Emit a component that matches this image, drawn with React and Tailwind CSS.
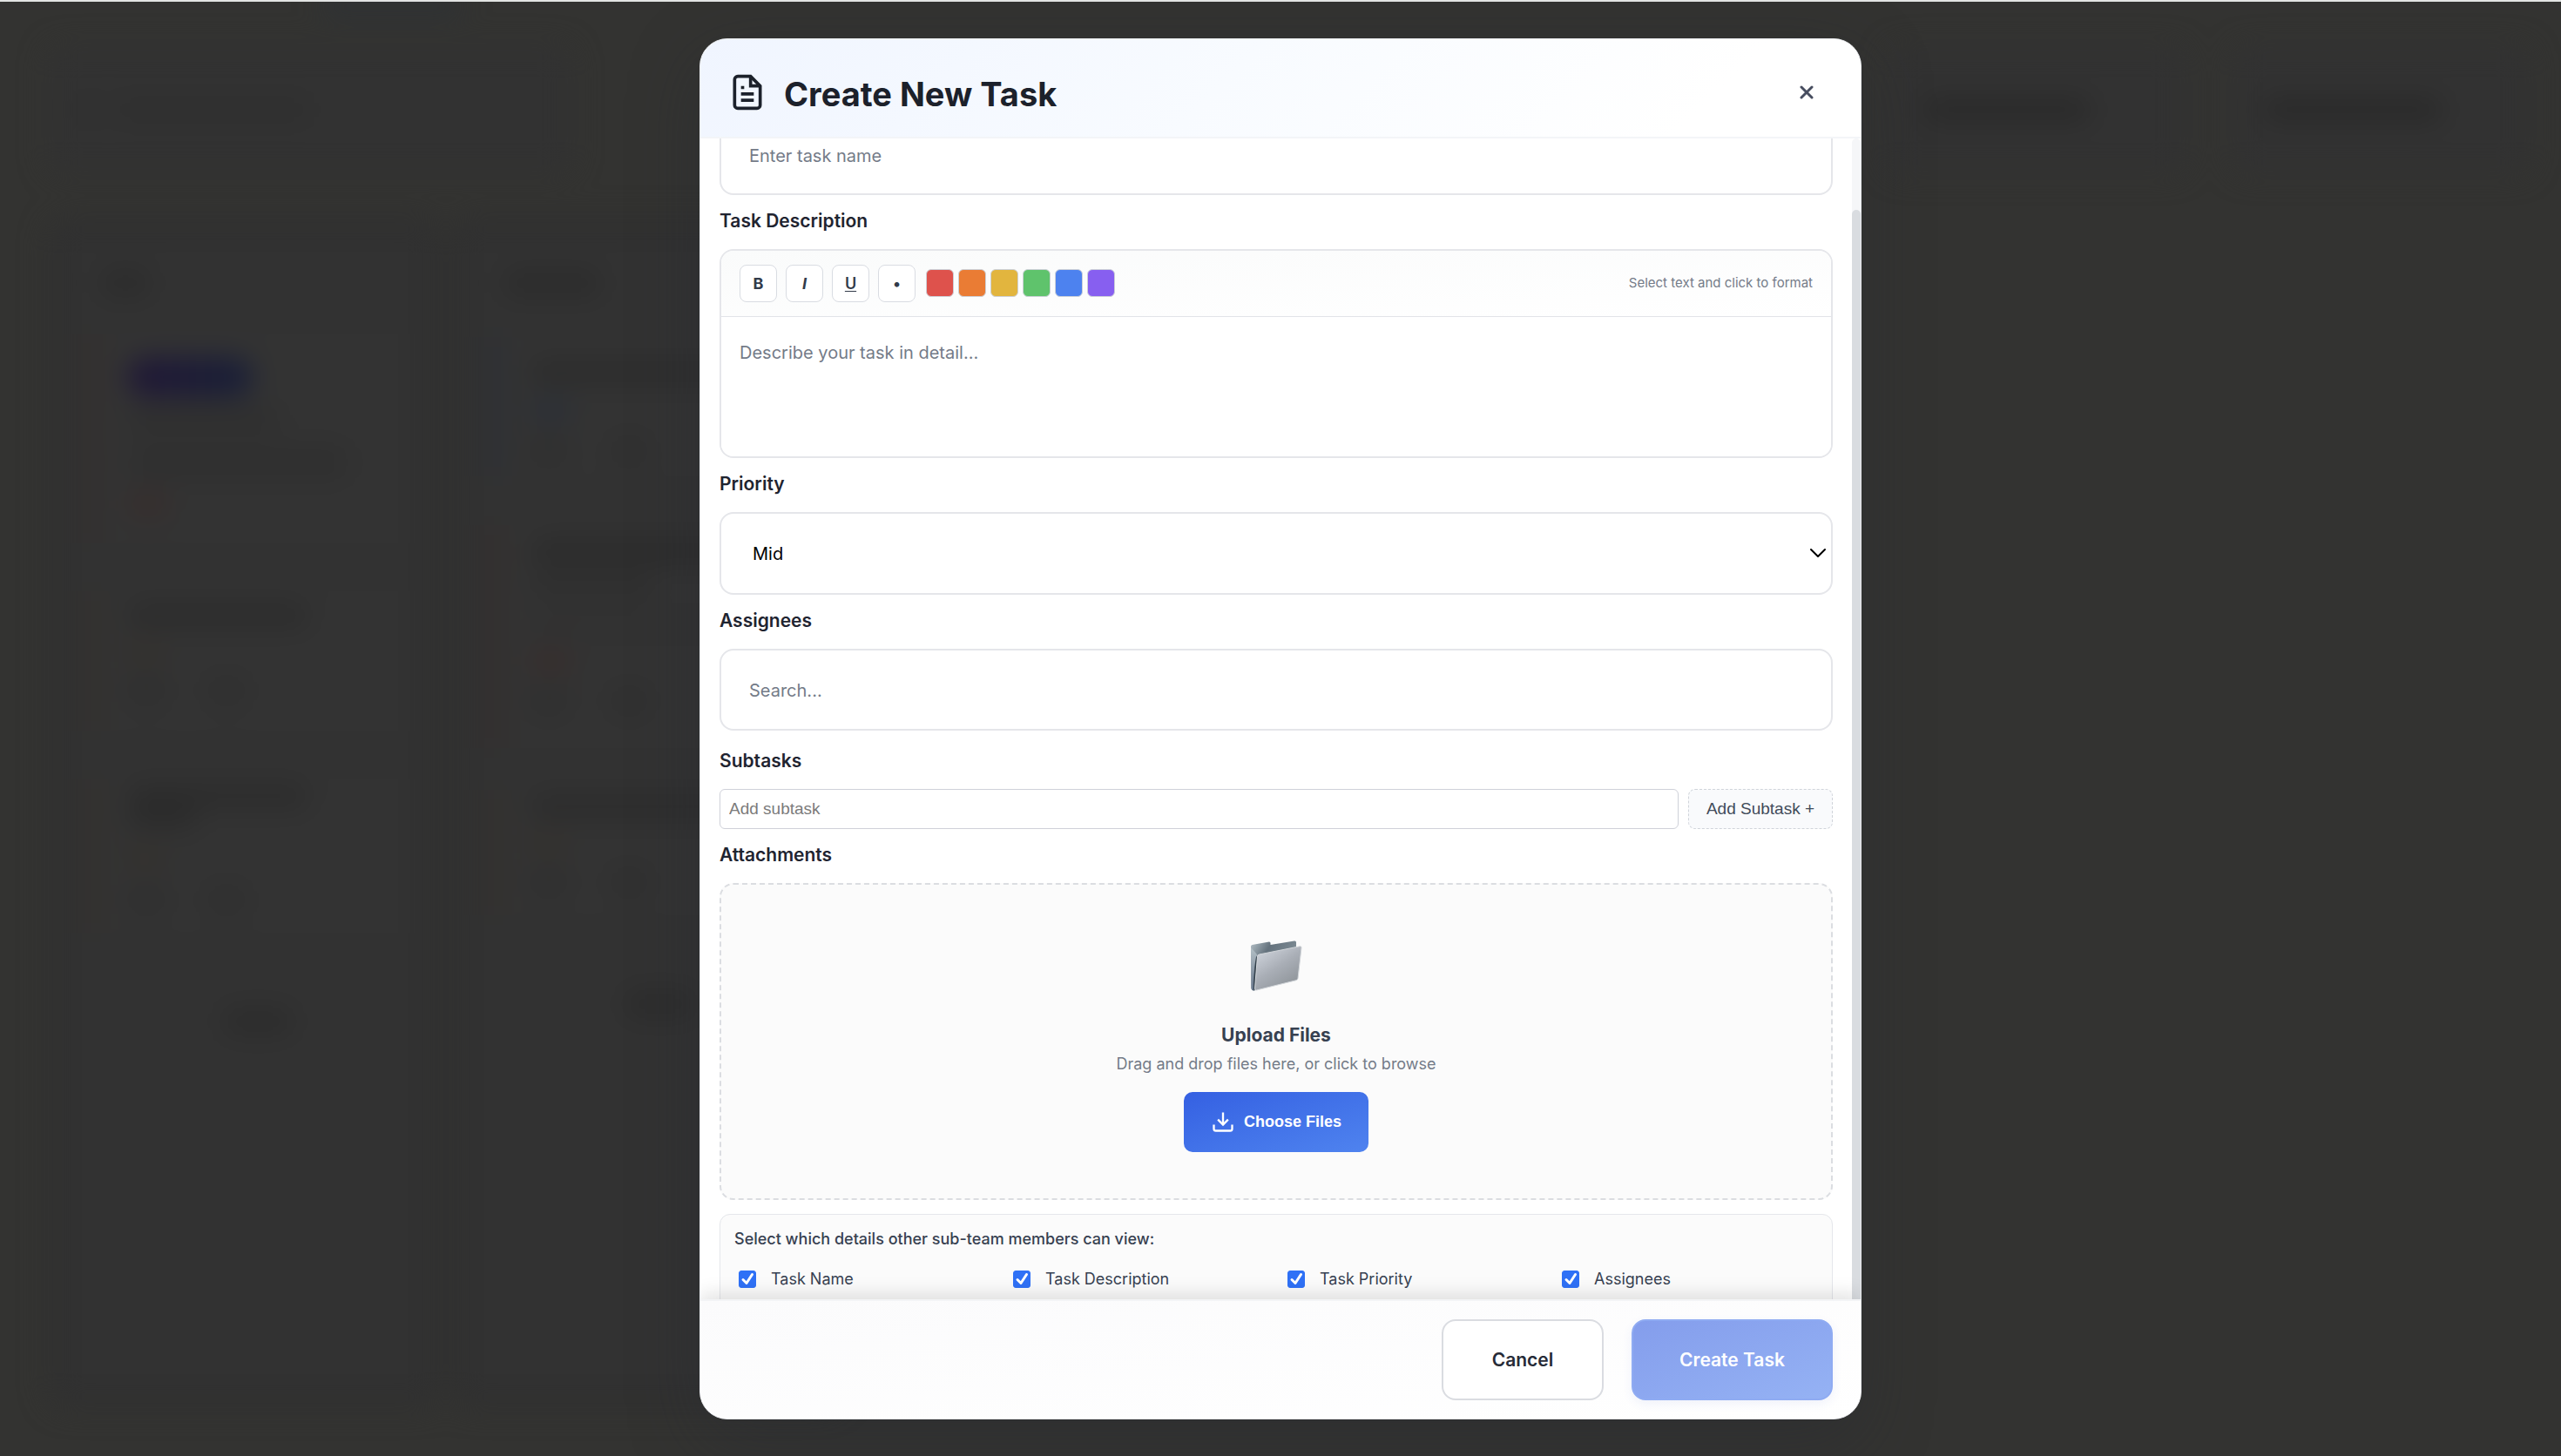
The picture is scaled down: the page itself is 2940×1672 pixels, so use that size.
import { useLayoutEffect, useRef } from "react";

const ui = "font-['Inter','Liberation_Sans',sans-serif]";
const arial = "font-['Liberation_Sans',Arial,sans-serif]";

const swatches = [
  ["Red", "bg-[#de524c]"],
  ["Orange", "bg-[#ea7c34]"],
  ["Yellow", "bg-[#e2b53e]"],
  ["Green", "bg-[#5fc36c]"],
  ["Blue", "bg-[#4d82ef]"],
  ["Purple", "bg-[#875ff0]"],
];

const details = ["Task Name", "Task Description", "Task Priority", "Assignees"];

function Bar({ className, tone = "bg-[#2b2b2b]" }) {
  return <div className={`rounded-full ${tone} ${className}`} />;
}

function GhostCard({ edge, className, children }) {
  return (
    <div className={`mx-5 flex flex-col items-start border-l-[14px] bg-[#333333] pl-8 ${edge} ${className}`}>
      {children}
    </div>
  );
}

function GhostMeta() {
  return (
    <div className="flex gap-12">
      <Bar className="h-7 w-11" tone="bg-[#2e2e2e]" />
      <Bar className="h-7 w-11" tone="bg-[#2e2e2e]" />
    </div>
  );
}

function Backdrop() {
  return (
    <div aria-hidden="true" className="absolute inset-0 overflow-hidden bg-[#333331]">
      <div className="flex h-full flex-col blur-[16px]">
        <div className="flex h-6 justify-center pr-[2040px]">
          <div className="h-3 w-40 bg-[#2a3038]" />
        </div>
        <div className="flex h-[225px] items-start justify-between pl-14 pr-9 pt-7">
          <div className="flex h-36 w-[600px] items-center gap-4 rounded-2xl bg-[#323232] px-8">
            <Bar className="size-7" tone="bg-[#2e2e2e]" />
            <Bar className="h-6 w-56" tone="bg-[#2e2e2e]" />
          </div>
          <div className="flex gap-14">
            <div className="flex h-36 w-[340px] items-center rounded-2xl bg-[#323232] px-10">
              <Bar className="h-7 w-48" tone="bg-[#292929]" />
            </div>
            <div className="flex h-36 w-[340px] items-center rounded-2xl bg-[#323232] px-8">
              <Bar className="h-7 w-52" tone="bg-[#292929]" />
            </div>
          </div>
        </div>
        <div className="flex flex-1 gap-3 px-14 pb-14">
          <div className="flex w-[450px] flex-col rounded-3xl border-[24px] border-[#303030] bg-[#323232] pt-9">
            <Bar className="mb-11 ml-9 h-7 w-14" />
            <GhostCard edge="border-[#352e2d]" className="mb-14 h-60 pt-7">
              <div className="h-11 w-36 rounded-full bg-linear-to-r from-[#1f1636] to-[#171e38]" />
              <Bar className="mt-4 h-5 w-44" tone="bg-[#2d2d2d]" />
              <Bar className="mt-5 h-10 w-64" tone="bg-[#2f2f2f]" />
              <Bar className="mt-4 h-6 w-12" tone="bg-[#382c2b]" />
            </GhostCard>
            <GhostCard edge="border-[#34302b]" className="mb-14 h-40 pt-4">
              <Bar className="h-6 w-52" />
              <Bar className="my-5 h-5 w-10" tone="bg-[#35302a]" />
              <GhostMeta />
            </GhostCard>
            <GhostCard edge="border-[#34302b]" className="mb-16 h-44 pt-2">
              <Bar className="h-6 w-52" />
              <Bar className="h-6 w-20" />
              <Bar className="my-6 h-5 w-10" tone="bg-[#35302a]" />
              <GhostMeta />
            </GhostCard>
            <Bar className="ml-44 mt-6 h-7 w-20" />
          </div>
          <div className="flex w-[450px] flex-col rounded-3xl border-[24px] border-[#303030] bg-[#323232] pt-9">
            <Bar className="mb-12 ml-9 h-7 w-28" />
            <GhostCard edge="border-[#2b2f36]" className="mb-14 h-40 pt-7">
              <Bar className="h-6 w-64" />
              <Bar className="my-5 h-6 w-12" tone="bg-[#2a2f38]" />
              <GhostMeta />
            </GhostCard>
            <GhostCard edge="border-[#352d2c]" className="mb-12 h-64 pt-4">
              <Bar className="h-7 w-64" />
              <Bar className="mt-3 h-6 w-36" tone="bg-[#2e2e2e]" />
              <Bar className="mt-6 h-5 w-60" tone="bg-[#303030]" />
              <Bar className="my-5 h-6 w-12" tone="bg-[#382c2b]" />
              <GhostMeta />
            </GhostCard>
            <GhostCard edge="border-[#34302b]" className="mb-12 h-36 pt-2">
              <Bar className="h-6 w-64" />
              <Bar className="my-5 h-5 w-10" tone="bg-[#35302a]" />
              <GhostMeta />
            </GhostCard>
            <Bar className="ml-44 mt-10 h-7 w-20" />
          </div>
        </div>
      </div>
    </div>
  );
}

function FileIcon() {
  return (
    <svg className="size-11" viewBox="0 0 24 24" fill="none" stroke="currentColor" strokeWidth="2" aria-hidden="true">
      <path d="M14 2H6a2 2 0 0 0-2 2v16a2 2 0 0 0 2 2h12a2 2 0 0 0 2-2V8z" />
      <polyline points="14,2 14,8 20,8" />
      <line x1="16" y1="13" x2="8" y2="13" />
      <line x1="16" y1="17" x2="8" y2="17" />
      <polyline points="10,9 9,9 8,9" />
    </svg>
  );
}

function FolderIcon() {
  return (
    <svg className="h-[58px] w-[60px]" viewBox="0 0 60 58" aria-hidden="true">
      <defs>
        <linearGradient id="folderBack" x1="0" y1="0" x2="1" y2="0.6">
          <stop offset="0" stopColor="#b3bfc6" />
          <stop offset="0.35" stopColor="#64727d" />
          <stop offset="1" stopColor="#86949c" />
        </linearGradient>
        <linearGradient id="folderSide" x1="0" y1="0" x2="0" y2="1">
          <stop offset="0" stopColor="#b4c0c6" />
          <stop offset="1" stopColor="#66758a" />
        </linearGradient>
        <linearGradient id="folderFront" x1="0.1" y1="0" x2="0.8" y2="1">
          <stop offset="0" stopColor="#d3d8e0" />
          <stop offset="0.5" stopColor="#a9aeb6" />
          <stop offset="1" stopColor="#8b9196" />
        </linearGradient>
      </defs>
      <path d="M1 7Q1 5.500 2.500 5L22 1.500Q23.500 1.500 23.500 3V5L51 .5Q53 .3 53 2V40L5 57.500Q2 58 1.500 55Z" fill="url(#folderBack)" />
      <path d="M1 8L8 16L5 57.500Q2 58 1.500 55Z" fill="url(#folderSide)" />
      <path d="M8.500 17L6.500 56L4 57L4 50Q5 28 7 19Z" fill="#33404b" />
      <path d="M8.500 18Q8.700 16.300 10.500 16L57.500 6.700Q59.300 6.500 59 8.500L55 43.500Q54.700 45.200 53 45.700L7.500 57Q5.300 57.500 5.500 55Z" fill="url(#folderFront)" stroke="#d2d6da" strokeWidth="1" />
    </svg>
  );
}

function DownloadIcon() {
  return (
    <svg className="size-7" viewBox="0 0 24 24" fill="none" stroke="currentColor" strokeWidth="2" aria-hidden="true">
      <path d="M21 15v4a2 2 0 0 1-2 2H5a2 2 0 0 1-2-2v-4" />
      <polyline points="7,10 12,15 17,10" />
      <line x1="12" y1="15" x2="12" y2="3" />
    </svg>
  );
}

function Label({ htmlFor, children }) {
  return (
    <label htmlFor={htmlFor} className="mb-[17px] mt-[15px] block text-[21px] leading-[30px] font-semibold text-[#1f2430]">
      {children}
    </label>
  );
}

const field =
  "block w-full rounded-2xl border-2 border-[#e5e6ea] bg-white px-8 pt-[2px] text-[20px] outline-none placeholder:text-[#747b88] placeholder:opacity-100";

function TaskForm() {
  return (
    <div className="px-[22px] pb-10">
      <input aria-label="Task Name" type="text" placeholder="Enter task name" className={`${field} h-[92px]`} />

      <Label htmlFor="task-description">Task Description</Label>
      <div className="overflow-hidden rounded-2xl border-2 border-[#e5e6ea]">
        <div className="flex items-center gap-[10px] border-b border-[#e2e4e8] bg-linear-to-br from-[#fafbfb] to-white px-[21px] py-4 text-[18px] text-[#323b4a]">
          {[
            ["Bold", "B", "font-bold"],
            ["Italic", "I", "font-bold italic"],
            ["Underline", "U", "font-semibold underline underline-offset-2"],
            ["Bullet list", "•", "font-semibold"],
          ].map(([name, glyph, style]) => (
            <button key={name} type="button" aria-label={name} className={`size-[43px] rounded-lg border border-[#d9dce2] bg-white ${style}`}>
              {glyph}
            </button>
          ))}
          <div className="ml-0.5 flex gap-[5px]">
            {swatches.map(([name, color]) => (
              <button key={name} type="button" aria-label={`${name} text`} className={`size-8 rounded-md border border-[#cdd1d8] ${color}`} />
            ))}
          </div>
          <span className="ml-auto text-[15px] text-[#747b88]">Select text and click to format</span>
        </div>
        <textarea
          id="task-description"
          placeholder="Describe your task in detail..."
          className="block h-[160px] w-full resize-none bg-white px-[21px] py-[25px] text-[20px] leading-8 outline-none placeholder:text-[#747b88] placeholder:opacity-100"
        />
      </div>

      <Label htmlFor="priority">Priority</Label>
      <div className="relative">
        <select id="priority" defaultValue="Mid" className={`${field} h-[95px] appearance-none pl-9 text-black`}>
          <option>Low</option>
          <option>Mid</option>
          <option>High</option>
        </select>
        <svg className="pointer-events-none absolute right-2 top-1/2 h-3 w-[18px] -translate-y-1/2" viewBox="0 0 18 12" fill="none" stroke="#000" strokeWidth="2" strokeLinecap="round" strokeLinejoin="round" aria-hidden="true">
          <path d="M1 2l8 8 8-8" />
        </svg>
      </div>

      <Label htmlFor="assignees">Assignees</Label>
      <input id="assignees" type="text" placeholder="Search..." className={`${field} h-[94px]`} />

      <div className="pt-[5px]">
        <Label htmlFor="subtask">Subtasks</Label>
      </div>
      <div className={`flex gap-[11px] text-[19px] ${arial}`}>
        <input id="subtask" type="text" placeholder="Add subtask" className="h-[46px] min-w-0 flex-1 rounded-md border border-[#cfd1d9] bg-white px-[10px] outline-none placeholder:text-[#7b7b7b] placeholder:opacity-100" />
        <button type="button" className="w-[166px] rounded-lg border border-dashed border-[#d0d4da] bg-[#f9fafc] text-[#414b5a]">
          Add Subtask +
        </button>
      </div>

      <Label htmlFor="attachments">Attachments</Label>
      <div className="flex flex-col items-center rounded-2xl border-2 border-dashed border-[#dbdde1] bg-[#fbfbfb] pb-[53px] pt-16">
        <input id="attachments" type="file" multiple className="sr-only" />
        <FolderIcon />
        <h3 className="mt-9 text-[21px] leading-[30px] font-bold text-[#374151]">Upload Files</h3>
        <p className="mb-[17px] mt-[3px] text-[18px] leading-[30px] text-[#747b88]">Drag and drop files here, or click to browse</p>
        <button type="button" className={`flex h-[69px] items-center gap-[10px] rounded-[10px] bg-linear-to-br from-[#3560e2] to-[#4f83ef] px-[31px] text-[18px] font-bold text-white ${arial}`}>
          <DownloadIcon />
          Choose Files
        </button>
      </div>

      <fieldset className="mt-4 rounded-xl border border-[#e5e7eb] bg-[#fbfbfb] px-4 pb-6 pt-[13px]">
        <p className="text-[18px] leading-[30px] font-medium text-[#374151]">Select which details other sub-team members can view:</p>
        <div className="mt-4 grid grid-cols-4 gap-4">
          {details.map((name) => (
            <label key={name} className="flex items-center gap-[17px] pl-[5px] text-[18px] leading-[30px] text-[#374151]">
              <span className="grid size-5 shrink-0">
                <input type="checkbox" defaultChecked className="peer col-start-1 row-start-1 size-5 appearance-none rounded-[3px] border border-[#8b8f98] bg-white checked:border-[#2f71f6] checked:bg-[#2f71f6]" />
                <svg className="pointer-events-none col-start-1 row-start-1 hidden size-5 peer-checked:block" viewBox="0 0 20 20" fill="none" stroke="#fff" strokeWidth="3" strokeLinecap="round" strokeLinejoin="round" aria-hidden="true">
                  <path d="M5 10.500l4 4 6.500-10" />
                </svg>
              </span>
              {name}
            </label>
          ))}
        </div>
      </fieldset>
    </div>
  );
}

export default function App() {
  const body = useRef(null);

  useLayoutEffect(() => {
    body.current.scrollTop = 27;
  }, []);

  return (
    <main className={`relative flex h-screen items-center justify-center overflow-hidden border-t-2 border-[#e2e4e3] ${ui}`}>
      <Backdrop />
      <div role="dialog" aria-modal="true" aria-labelledby="dialog-title" className="relative flex h-[95%] w-full max-w-[1334px] flex-col overflow-hidden rounded-[32px] border border-[#e5e7eb] bg-white shadow-[0_24px_80px_rgba(40,42,50,0.4)]">
        <header className="flex h-[114px] shrink-0 items-center border-b-2 border-[#f3f5f8] bg-[linear-gradient(135deg,#f0f5ff_0%,#f8fbff_45%,#ffffff_85%)] px-8 pt-[11px] text-[#1c212b]">
          <FileIcon />
          <h2 id="dialog-title" className="ml-5 pt-1 text-[38px] leading-[48px] font-bold">Create New Task</h2>
          <button type="button" aria-label="Close" className="ml-auto grid size-[60px] place-items-center text-[#474d5f]">
            <svg className="size-4" viewBox="0 0 16 16" fill="none" stroke="currentColor" strokeWidth="3" strokeLinecap="round" aria-hidden="true">
              <path d="M2 2l12 12M14 2L2 14" />
            </svg>
          </button>
        </header>
        <div className="flex min-h-0 flex-1">
          <div ref={body} className="relative min-w-0 flex-1 overflow-y-auto [scrollbar-width:none]">
            <TaskForm />
          </div>
          <div className="w-[10px] rounded-t-full bg-[#f5f6f8] pt-[82px]">
            <div className="h-full rounded-t-full bg-[#d9dce0]" />
          </div>
        </div>
        <footer className="relative flex shrink-0 justify-end gap-8 border-t-2 border-[#f3f4f6] bg-linear-to-br from-[#fbfbfc] to-white px-8 py-[21px] text-[21px] font-semibold shadow-[0_-6px_20px_rgba(0,0,0,0.12)]">
          <button type="button" className="h-[93px] w-[186px] rounded-2xl border-2 border-[#dadce1] bg-white text-[#262b37]">Cancel</button>
          <button type="button" disabled className="h-[93px] w-[231px] rounded-2xl border-2 border-[#8fabf2] bg-linear-to-br from-[#849dec] to-[#95b2f4] text-white shadow-[0_4px_12px_rgba(60,90,200,0.08)]">Create Task</button>
        </footer>
      </div>
    </main>
  );
}
